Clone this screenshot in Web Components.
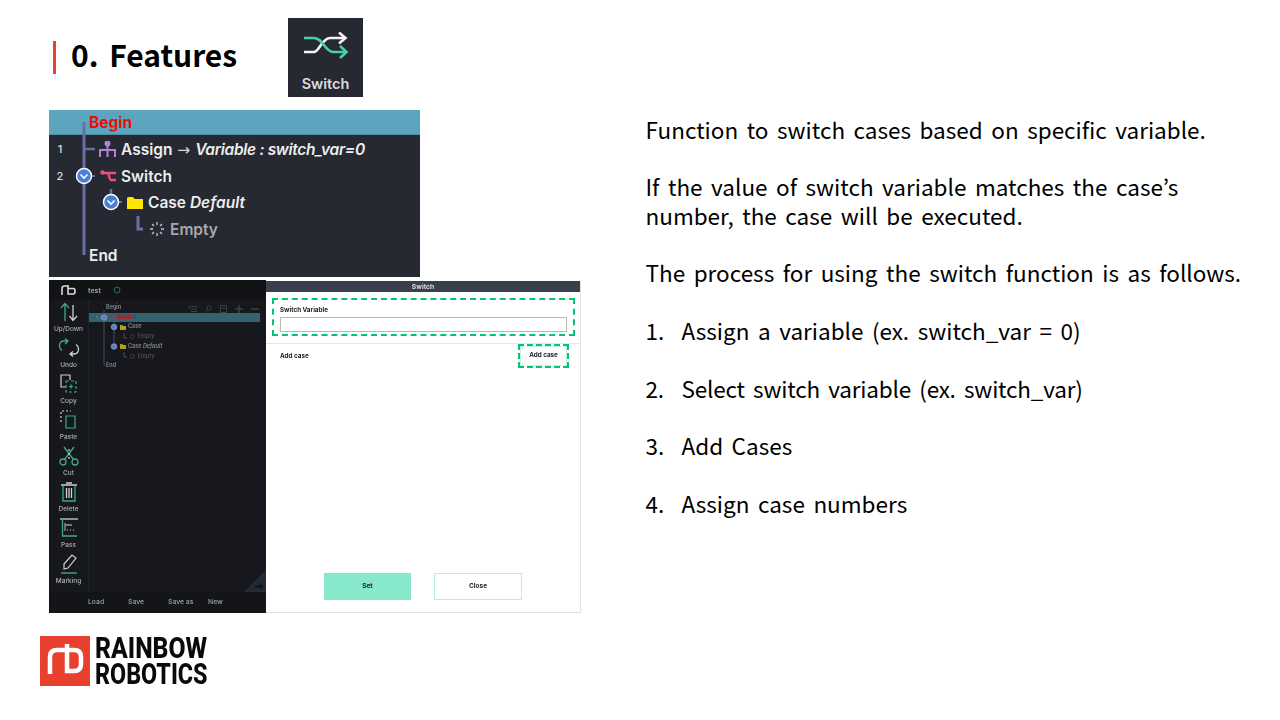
<!DOCTYPE html>
<html>
<head>
<meta charset="utf-8">
<title>Switch features</title>
<style>
html,body{margin:0;padding:0;background:#fff;}
body{width:1280px;height:720px;overflow:hidden;font-family:"Noto Sans","Noto Sans CJK KR",sans-serif;}
</style>
</head>
<body>
<rb-slide>
  <slide-title slot="left">0. Features</slide-title>
  <flow-panel slot="left"></flow-panel>
  <editor-window slot="left"></editor-window>
  <rb-logo slot="left"></rb-logo>
  <feature-text slot="right"></feature-text>
</rb-slide>

<script>
function define(name,html,setup){
    const template=document.createElement("template");
    template.innerHTML=html;
    customElements.define(name,class extends HTMLElement{
        constructor(){
            super();
            this.attachShadow({mode:'open'});
            this.shadowRoot.appendChild(template.content.cloneNode(true));
        }
        connectedCallback(){
            if(setup)setup(this,this.shadowRoot);
        }
    });
}

define("rb-slide",`
<style>
:host{display:flex;width:1280px;height:720px;}
.left{width:605.5px;flex:none;padding-left:40px;display:flex;flex-direction:column;}
.right{flex:1;padding-top:114.5px;}
</style>
<div class="left"><slot name="left"></slot></div>
<div class="right"><slot name="right"></slot></div>`);

define("slide-title",`
<style>
:host{display:flex;align-items:center;height:79px;margin-top:18px;padding-left:13px;}
.bar{width:3px;height:33px;background:#e8412f;margin-right:15px;}
h1{margin:0 0 8px;width:217px;font:700 30px/1 "Noto Sans CJK KR","Noto Sans",sans-serif;word-spacing:4px;color:#000;white-space:nowrap;}
.badge{width:75px;height:79px;background:#262832;display:flex;flex-direction:column;align-items:center;color:#dcdce0;font:600 14.5px/1 Inter,sans-serif;}
.badge svg{margin-top:14px;margin-bottom:18px;}
</style>
<div class="bar"></div>
<h1><slot></slot></h1>
<div class="badge">
<svg width="46" height="27" viewBox="0 0 46 27" fill="none" stroke-width="2.6">
<path d="M1 20H11C16 20 19 6 27 6H42" stroke="#f4f4f4"/>
<path d="M36 0.500L42.500 6L36 11.500" stroke="#f4f4f4"/>
<path d="M1 6H11C20 6 22 20 30 20H43" stroke="#45d3aa"/>
<path d="M37 14L43.500 20L37 26" stroke="#45d3aa"/>
</svg>
Switch
</div>`);

define("flow-row",`
<style>
:host{display:flex;align-items:center;height:26.5px;color:#eceded;font:600 15.5px/1 Inter,sans-serif;white-space:nowrap;}
.num{width:22px;flex:none;text-align:center;font:500 11px/1 Inter,sans-serif;color:#ddd;}
.body{display:flex;align-items:center;gap:5px;}
</style>
<span class="num"></span><div class="body"><slot></slot></div>`,
(el,root)=>{
    root.querySelector('.num').textContent=el.getAttribute('num')||'';
    root.querySelector('.body').style.marginLeft=(el.getAttribute('indent')||0)+'px';
});

define("flow-panel",`
<style>
:host{display:block;position:relative;width:371px;height:167px;margin:13px 0 0 9px;background:#262832;overflow:hidden;}
.head{padding-top:1px;height:23px;background:#5ba6be;border-bottom:1px solid #4d8ea3;display:flex;align-items:center;padding-left:40px;color:#f00a0a;font:700 15.5px/1 Inter,sans-serif;}
.lines{position:absolute;left:0;top:0;}
.rows{padding-top:1.5px;}
i{font-style:italic;}
.v{letter-spacing:-.3px;}
.arrow{font-weight:400;color:#d5d5da;font-family:"DejaVu Sans",sans-serif;margin:0 1px;}
</style>
<div class="head">Begin</div>
<div class="rows">
<flow-row num="1" indent="28">
  <svg width="17" height="17" viewBox="0 0 17 17" fill="none" stroke="#b283d4" stroke-width="2"><circle cx="8.500" cy="2.500" r="2" fill="#b283d4"/><path d="M8.500 3V16M1 16V9H16V16"/></svg>
  <span>Assign <span class="arrow">→</span> <i class="v">Variable : switch_var=0</i></span>
</flow-row>
<flow-row num="2" indent="29">
  <svg width="16" height="12" viewBox="0 0 16 12" fill="none" stroke="#ef4f7e" stroke-width="2.400"><circle cx="2.500" cy="2.500" r="2.200" fill="#ef4f7e" stroke="none"/><path d="M3 3H8C9 3 9 10 11 10H16M9 3H16"/></svg>
  <span>Switch</span>
</flow-row>
<flow-row indent="56">
  <svg width="16" height="12" viewBox="0 0 16 12"><path d="M0 1.500Q0 0 1.500 0H6L7.500 2H16V12H0Z" fill="#ffe600"/></svg>
  <span>Case <i>Default</i></span>
</flow-row>
<flow-row indent="78" style="color:#a9a9ad">
  <svg width="16" height="16" viewBox="0 0 16 16" fill="none" stroke="#c8c8cc" stroke-width="1.300"><path d="M8 1V4M8 12V15M1 8H4M12 8H15M3 3L5 5M11 11L13 13M3 13L5 11M11 5L13 3"/></svg>
  <span>Empty</span>
</flow-row>
<flow-row indent="18">End</flow-row>
</div>
<svg class="lines" width="371" height="167" fill="none">
  <path d="M35 12V145" stroke="#6a6fa3" stroke-width="3"/>
  <path d="M36 39H46" stroke="#6a6fa3" stroke-width="2.500"/>
  <path d="M62 79V92" stroke="#6a6fa3" stroke-width="2.500"/>
  <path d="M42 66H46M69 92H73" stroke="#6a6fa3" stroke-width="2"/>
  <path d="M89 106V119H94" stroke="#6a6fa3" stroke-width="3"/>
  <g stroke="#fff" stroke-width="1.500" fill="#4a7fd6"><circle cx="35" cy="66" r="7.500"/><circle cx="62" cy="92" r="7.500"/></g>
  <g stroke="#fff" stroke-width="1.600"><path d="M31.500 64.500L35 68L38.500 64.500M58.500 90.500L62 94L65.500 90.500"/></g>
</svg>`);

define("tool-button",`
<style>
:host{display:flex;flex-direction:column;align-items:center;height:36px;padding-top:2px;box-sizing:border-box;color:#adb0b4;font:500 6.500px/8px Inter,sans-serif;}
.icon{height:23px;display:flex;align-items:flex-start;}
</style>
<div class="icon"><slot name="icon"></slot></div>
<span class="label"></span>`,
(el,root)=>{root.querySelector('.label').textContent=el.getAttribute('label');});

define("tree-row",`
<style>
:host{display:flex;align-items:center;gap:2px;height:9.700px;color:#85878b;font:600 5.500px/1 Inter,sans-serif;white-space:nowrap;}
</style>
<slot></slot>`,
(el)=>{el.style.paddingLeft=(el.getAttribute('indent')||0)+'px';});

define("dialog-button",`
<style>
:host{display:flex;align-items:center;justify-content:center;box-sizing:border-box;width:88px;height:27px;color:#222;font:700 6.500px/1 Inter,sans-serif;border:1.5px solid #b5f0de;background:#fff;}
:host([filled]){background:#88e8cb;border-color:#88e8cb;width:87px;margin-left:1px;}
</style>
<slot></slot>`);

define("editor-window",`
<style>
:host{display:flex;flex-direction:column;position:relative;width:532px;height:333px;margin:3px 0 0 9px;}
.wrap{display:flex;height:333px;filter:blur(.35px);}
.dark{width:217px;flex:none;background:#16181d;display:flex;flex-direction:column;font-family:Inter,sans-serif;position:relative;}
.top{height:20px;flex:none;background:#111317;display:flex;align-items:center;padding-left:12px;gap:12px;color:#9ea1a4;font:600 7px/1 Inter,sans-serif;}
.mid{flex:1;display:flex;min-height:0;position:relative;}
.tools{width:39px;flex:none;border-right:1px solid #20232a;}
.tree{flex:1;padding-top:3px;position:relative;}
.tree i{font-style:italic;}
.tree-icons{position:absolute;left:99px;top:5px;width:71px;display:flex;justify-content:space-between;}
.guides{position:absolute;left:0;top:0;}
.corner{position:absolute;right:0;bottom:0;}
.bottom{height:21px;flex:none;background:#131519;display:flex;align-items:center;padding-left:39px;color:#8f9296;font:600 6.800px/1 Inter,sans-serif;}
.bottom span{width:40px;}
.white{flex:1;background:#fff;border-right:1px solid #e2e2e2;border-bottom:1px solid #e2e2e2;display:flex;flex-direction:column;}
.bar{height:11px;background:#3a3f4d;margin-top:1px;color:#e4e4e8;text-align:center;font:600 6.800px/11px Inter,sans-serif;}
.var{box-sizing:border-box;margin:6px 5px 0 6px;height:38px;border:2px dashed #00c76f;padding:6px 6px 0 6px;color:#222;font:700 6.300px/8px Inter,sans-serif;}
.input{box-sizing:border-box;height:15px;margin-top:3px;border:1px solid #b9b9b9;}
.case{position:relative;margin-top:7px;border-top:1px solid #e6e6e6;display:flex;align-items:center;justify-content:space-between;height:24px;padding:0 11px 0 14px;color:#222;font:700 6.300px/1 Inter,sans-serif;}
.add{box-sizing:border-box;width:51px;height:24px;border:2px dashed #00c76f;margin-top:-1px;display:flex;align-items:center;justify-content:center;box-shadow:inset 0 0 0 1px #c7f3e6;}
.space{flex:1;}
.actions{display:flex;gap:23px;padding:0 0 12px 57px;}
</style>
<div class="wrap">
<div class="dark">
  <div class="top">
    <svg width="15" height="10" viewBox="0 0 15 10" fill="none" stroke="#d8d8da" stroke-width="1.600"><path d="M1 10V3.500Q1 1 3.500 1H7V9H12Q14 9 14 7V5.500Q14 3.500 12 3.500H7M7 0V9"/></svg>
    <span>test</span>
    <svg width="8" height="8" viewBox="0 0 8 8" fill="none" stroke="#2d6d5d" stroke-width="1"><circle cx="4" cy="4" r="3"/></svg>
  </div>
  <div class="mid">
    <div class="tools">
      <tool-button label="Up/Down"><svg slot="icon" width="20" height="20" viewBox="0 0 20 20" fill="none" stroke-width="1.300"><path d="M6 19V2M2 6L6 1.500L10 6" stroke="#3fa88b"/><path d="M14 3V18M10.500 14L14 18.500L18 14" stroke="#cfd0d2"/></svg></tool-button>
      <tool-button label="Undo"><svg slot="icon" width="22" height="20" viewBox="0 0 22 20" fill="none" stroke-width="1.300"><path d="M10 3H6Q1.500 3 1.500 8Q1.500 11 4 12.500M7 .5L10 3L7 6" stroke="#3fa88b"/><path d="M12 16H16Q20.500 16 20.500 11Q20.500 8 18 6.500M15 13.500L12 16L15 18.500" stroke="#cfd0d2"/></svg></tool-button>
      <tool-button label="Copy"><svg slot="icon" width="18" height="20" viewBox="0 0 18 20" fill="none" stroke-width="1.200"><path d="M6 13H1V1H10V6" stroke="#cfd0d2"/><path d="M6 7H16V18H6Z" stroke="#3fa88b" stroke-dasharray="3 2"/><path d="M9 12.500H13M11 10.500V14.500" stroke="#3fa88b"/></svg></tool-button>
      <tool-button label="Paste"><svg slot="icon" width="18" height="20" viewBox="0 0 18 20" fill="none" stroke-width="1.200"><path d="M1 12V1H11" stroke="#cfd0d2" stroke-dasharray="2 2"/><path d="M6 6H15V18H6Z" stroke="#3fa88b"/></svg></tool-button>
      <tool-button label="Cut"><svg slot="icon" width="20" height="20" viewBox="0 0 20 20" fill="none" stroke-width="1.300"><g stroke="#3fa88b"><circle cx="4" cy="16" r="3"/><circle cx="16" cy="16" r="3"/><path d="M5.500 13.500L15 1M14.500 13.500L5 1"/></g><path d="M10 3V15" stroke="#cfd0d2" stroke-dasharray="2 2"/></svg></tool-button>
      <tool-button label="Delete"><svg slot="icon" width="18" height="20" viewBox="0 0 18 20" fill="none" stroke-width="1.300"><path d="M1 3H17M6 1H12" stroke="#cfd0d2"/><path d="M3 3.500V19H15V3.500" stroke="#3fa88b"/><path d="M6.500 6V16M9 6V16M11.500 6V16" stroke="#cfd0d2"/></svg></tool-button>
      <tool-button label="Pass"><svg slot="icon" width="18" height="20" viewBox="0 0 18 20" fill="none" stroke-width="1.300"><path d="M0 1H18" stroke="#cfd0d2"/><path d="M2.500 1V18H17" stroke="#3fa88b"/><path d="M5 5V13M5 7H12M7 12H8M10 12H11M13 12H14" stroke="#8a9a96"/></svg></tool-button>
      <tool-button label="Marking"><svg slot="icon" width="18" height="20" viewBox="0 0 18 20" fill="none" stroke-width="1.200"><path d="M4 10L12 1L16 4L8 14L4 15Z" stroke="#cfd0d2"/><path d="M1 19H17" stroke="#3fa88b" stroke-width="1.400"/></svg></tool-button>
    </div>
    <div class="tree">
      <tree-row indent="17">Begin</tree-row>
      <tree-row indent="21" style="background:#35626f;margin-right:6px;color:#b01a1f;font-weight:800;gap:1.500px"><svg width="6" height="4" viewBox="0 0 6 4" fill="none" stroke="#c8264a"><path d="M0 1H2.500L4 3H6M3 1H6"/></svg>Switch</tree-row>
      <tree-row indent="31"><svg width="6" height="5" viewBox="0 0 6 5"><path d="M0 0H2.500L3 1H6V5H0Z" fill="#b59d16"/></svg>Case</tree-row>
      <tree-row indent="41" style="color:#4c4e52;gap:2.500px"><svg width="5" height="5" viewBox="0 0 5 5" fill="none" stroke="#4c4e52" stroke-width=".7"><circle cx="2.500" cy="2.500" r="2"/></svg>Empty</tree-row>
      <tree-row indent="31"><svg width="6" height="5" viewBox="0 0 6 5"><path d="M0 0H2.500L3 1H6V5H0Z" fill="#b59d16"/></svg><span>Case <i>Default</i></span></tree-row>
      <tree-row indent="41" style="color:#4c4e52;gap:2.500px"><svg width="5" height="5" viewBox="0 0 5 5" fill="none" stroke="#4c4e52" stroke-width=".7"><circle cx="2.500" cy="2.500" r="2"/></svg>Empty</tree-row>
      <tree-row indent="17">End</tree-row>
      <div class="tree-icons">
        <svg width="9" height="8" viewBox="0 0 9 8" stroke="#3c3f44" fill="none"><path d="M3 1.500H9M3 4H9M3 6.500H9M0 2L1 3L2 1"/></svg>
        <svg width="7" height="8" viewBox="0 0 7 8" stroke="#3c3f44" fill="none"><circle cx="4.200" cy="2.800" r="2.300"/><path d="M2.500 4.800L0 8"/></svg>
        <svg width="7" height="8" viewBox="0 0 7 8" stroke="#3c3f44" fill="none"><path d="M.5 .5H6.500V7.500H.5ZM2 3H5"/></svg>
        <svg width="8" height="8" viewBox="0 0 8 8" stroke="#3c3f44" stroke-width="1.500"><path d="M0 4H8M4 0V8"/></svg>
        <svg width="8" height="8" viewBox="0 0 8 8" stroke="#3c3f44" stroke-width="1.500"><path d="M0 4H8"/></svg>
      </div>
      <svg class="guides" width="178" height="70" viewBox="0 0 178 70" fill="none">
        <path d="M15 10V65M15 65H16" stroke="#454a68"/>
        <path d="M25 22V46M35 33V38H38M35 52V57H38" stroke="#454a68"/>
        <g fill="#5f7fc0" stroke="#9db0d6" stroke-width=".6"><circle cx="15" cy="17.500" r="2.800"/><circle cx="25" cy="27" r="2.800"/><circle cx="25" cy="46.500" r="2.800"/></g>
        <text x="7" y="20" fill="#7e8a90" font-family="Inter,sans-serif" font-size="4.500">1</text>
      </svg>
    </div>
    <svg class="corner" width="22" height="22" viewBox="0 0 22 22"><path d="M22 0V22H0Z" fill="#232a33"/><path d="M11 15H16V12.500L20 16.500L16 20V18H11Z" fill="#14161a"/></svg>
  </div>
  <div class="bottom"><span>Load</span><span>Save</span><span>Save as</span><span>New</span></div>
</div>
<div class="white">
  <div class="bar">Switch</div>
  <div class="var">Switch Variable<div class="input"></div></div>
  <div class="case"><span>Add case</span><span class="add">Add case</span></div>
  <div class="space"></div>
  <div class="actions"><dialog-button filled>Set</dialog-button><dialog-button>Close</dialog-button></div>
</div>
</div>`);

define("rb-logo",`
<style>
:host{display:flex;align-items:center;gap:5px;margin:22px 0 0 0;height:51px;}
.mark{width:50px;height:50px;background:#e8402f;display:block;flex:none;}
.name{color:#0a0a0a;font:800 29.500px/26px Roboto,sans-serif;white-space:nowrap;}
.name div{transform-origin:0 50%;}
.a{transform:scaleX(.84);}
.b{transform:scaleX(.79);}
</style>
<svg class="mark" viewBox="0 0 50 50" fill="none" stroke="#fff" stroke-width="4.500"><path d="M10 38V21Q10 14 17 14H27"/><path d="M27 8V35H34Q41 35 41 28V21Q41 14 34 14H27"/></svg>
<div class="name"><div class="a">RAINBOW</div><div class="b">ROBOTICS</div></div>`);

define("feature-text",`
<style>
:host{display:block;color:#000;font:400 22.500px/28.800px "Noto Sans CJK KR","Noto Sans",sans-serif;word-spacing:3.500px;white-space:nowrap;}
p{margin:0 0 28.800px;}
ol{margin:0;padding:0;list-style:none;}
li{display:flex;margin-bottom:28.800px;}
li span{width:36px;flex:none;}
</style>
<p>Function to switch cases based on specific variable.</p>
<p>If the value of switch variable matches the case’s<br>number, the case will be executed.</p>
<p>The process for using the switch function is as follows.</p>
<ol>
<li><span>1.</span>Assign a variable (ex. switch_var = 0)</li>
<li style="letter-spacing:-.2px"><span>2.</span>Select switch variable (ex. switch_var)</li>
<li><span>3.</span>Add Cases</li>
<li><span>4.</span>Assign case numbers</li>
</ol>`);
</script>
</body>
</html>
